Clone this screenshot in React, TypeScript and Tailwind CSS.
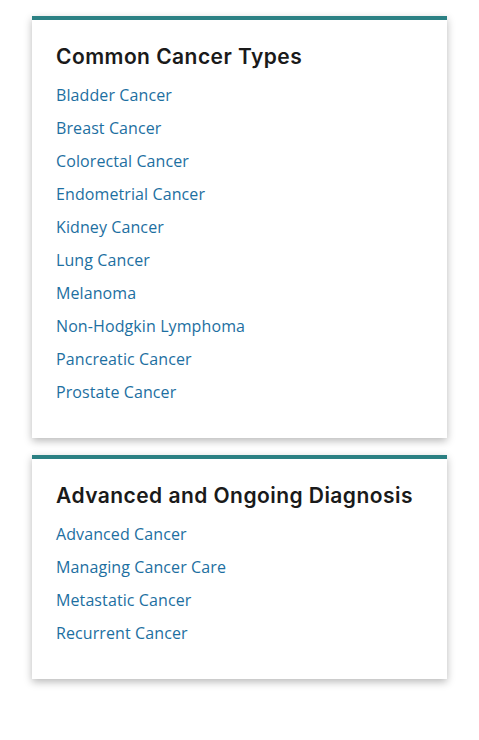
import React from "react";

const sections = [
  {
    title: "Common Cancer Types",
    links: [
      "Bladder Cancer",
      "Breast Cancer",
      "Colorectal Cancer",
      "Endometrial Cancer",
      "Kidney Cancer",
      "Lung Cancer",
      "Melanoma",
      "Non-Hodgkin Lymphoma",
      "Pancreatic Cancer",
      "Prostate Cancer",
    ],
  },
  {
    title: "Advanced and Ongoing Diagnosis",
    links: [
      "Advanced Cancer",
      "Managing Cancer Care",
      "Metastatic Cancer",
      "Recurrent Cancer",
    ],
  },
];

export default function App() {
  return (
    <div className="min-h-[740px] w-[479px] bg-white pt-4 px-8 flex flex-col gap-[17px]">
      {sections.map((s) => (
        <div
          key={s.title}
          className="w-[415px] border-t-4 border-[#2b8083] bg-white px-6 pt-[22px] pb-[34px] shadow-[0_3px_8px_rgba(0,0,0,0.28)]"
        >
          <h2
            className="text-[21px] leading-[29px] font-semibold text-[#1a1a1a] tracking-[0.45px]"
            style={{ fontFamily: "Inter, 'Open Sans', sans-serif" }}
          >
            {s.title}
          </h2>
          <ul className="mt-[12px] flex flex-col gap-[9px]">
            {s.links.map((l) => (
              <li key={l} className="leading-[24px]">
                <a
                  href="#"
                  className="text-[16px] text-[#1d6fa1] tracking-[0.1px]"
                  style={{ fontFamily: "'Open Sans', sans-serif" }}
                >
                  {l}
                </a>
              </li>
            ))}
          </ul>
        </div>
      ))}
    </div>
  );
}
